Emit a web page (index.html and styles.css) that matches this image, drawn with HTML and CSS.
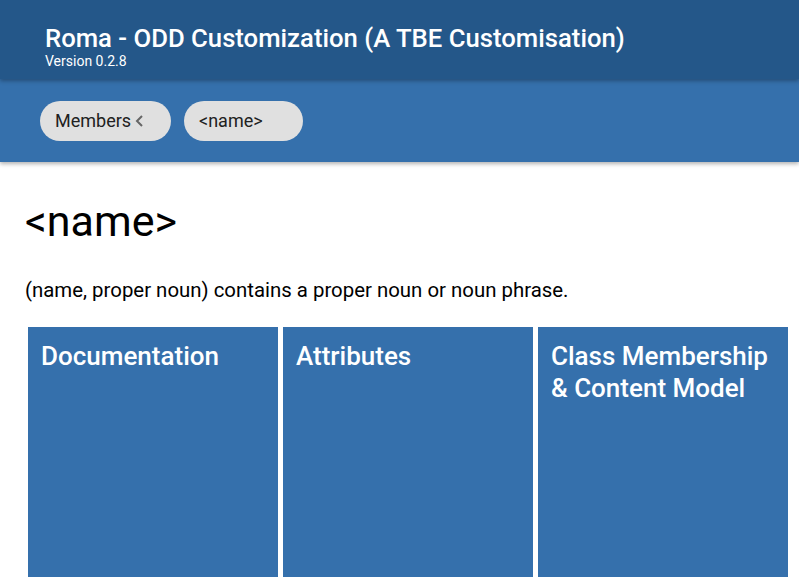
FILE: index.html
```html
<!DOCTYPE html>
<html>
<head>
<meta charset="utf-8">
<link rel="stylesheet" href="styles.css">
</head>
<body>
<header class="appbar">
  <div class="title">Roma - ODD Customization (A TBE Customisation)</div>
  <div class="version">Version 0.2.8</div>
</header>
<nav class="crumbs">
  <div class="chip chip-members">Members<svg class="chev" width="10" height="16" viewBox="0 0 10 16"><path d="M8 3 L3 8 L8 13" fill="none" stroke="#666" stroke-width="2"/></svg></div>
  <div class="chip chip-name">&lt;name&gt;</div>
</nav>
<main class="content">
  <h1 class="elname">&lt;name&gt;</h1>
  <p class="desc">(name, proper noun) contains a proper noun or noun phrase.</p>
  <div class="cards">
    <div class="card"><h2>Documentation</h2></div>
    <div class="card"><h2>Attributes</h2></div>
    <div class="card"><h2>Class Membership &amp; Content Model</h2></div>
  </div>
</main>
</body>
</html>
```
FILE: styles.css
```css
* { box-sizing: border-box; }
html, body { margin: 0; padding: 0; overflow: hidden; }
body {
  font-family: Roboto, "Noto Sans", sans-serif;
  background: #fff;
  width: 799px;
  height: 586px;
}
.appbar {
  position: relative;
  z-index: 2;
  background: #245789;
  color: #fff;
  height: 79px;
  padding: 23px 0 0 45px;
  box-shadow: 0 2px 4px rgba(0,0,0,0.3);
}
.title {
  font-size: 25.7px;
  font-weight: 500;
  line-height: 30px;
}
.version {
  font-size: 14px;
  line-height: 16px;
  margin-top: 0;
}
.crumbs {
  position: relative;
  z-index: 1;
  background: #3570ac;
  height: 83px;
  display: flex;
  align-items: center;
  gap: 13px;
  padding: 0 0 0 40px;
  box-shadow: 0 2px 4px rgba(0,0,0,0.3);
}
.chip {
  background: #e0e0e0;
  height: 40px;
  border-radius: 20px;
  display: flex;
  align-items: center;
  color: #212121;
}
.chip-members {
  width: 131px;
  padding-left: 15px;
  font-size: 18px;
}
.chev { margin-left: 3px; }
.chip-name {
  width: 119px;
  padding-left: 15px;
  font-size: 18px;
}
.content {
  padding: 0 0 0 25px;
}
.elname {
  font-size: 43px;
  font-weight: 400;
  margin: 33px 0 0;
  line-height: 52px;
}
.desc {
  font-size: 20.4px;
  margin: 30px 0 0;
  line-height: 26px;
}
.cards {
  display: flex;
  gap: 5px;
  margin-top: 24px;
  padding-left: 3px;
}
.card {
  background: #3570ac;
  width: 250px;
  height: 250px;
  flex: none;
  padding: 13px 13px;
}
.card h2 {
  margin: 0;
  color: #fff;
  font-size: 26px;
  font-weight: 500;
  line-height: 32px;
}
```
